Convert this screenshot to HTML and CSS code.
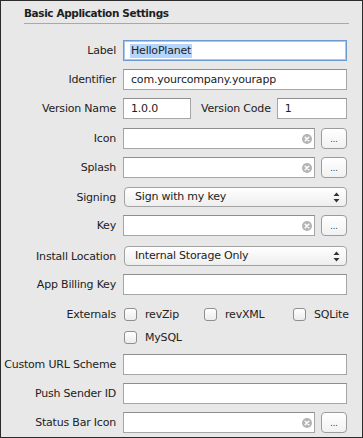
FILE: index.html
```html
<!DOCTYPE html>
<html lang="en">
<head>
  <meta charset="UTF-8">
  <title>Basic Application Settings</title>
  <link rel="stylesheet" href="styles.css">
</head>
<body>
  <div class="panel">
    <div class="header">Basic Application Settings</div>

    <div class="row first">
      <span class="label">Label</span>
      <div class="field focus"><span class="sel">HelloPlanet</span></div>
    </div>
    <div class="row">
      <span class="label">Identifier</span>
      <div class="field">com.yourcompany.yourapp</div>
    </div>
    <div class="row">
      <span class="label">Version Name</span>
      <div class="field short">1.0.0</div>
      <span class="label inline">Version Code</span>
      <div class="field">1</div>
    </div>
    <div class="row gap9">
      <span class="label">Icon</span>
      <div class="field file">
        <svg class="clear" width="10" height="10" viewBox="0 0 10 10"><circle cx="5" cy="5" r="5" fill="#b4b4b4"/><path d="M3.2 3.2 L6.8 6.8 M6.8 3.2 L3.2 6.8" stroke="#fff" stroke-width="1.5" stroke-linecap="round"/></svg>
      </div>
      <div class="browse">...</div>
    </div>
    <div class="row">
      <span class="label">Splash</span>
      <div class="field file">
        <svg class="clear" width="10" height="10" viewBox="0 0 10 10"><circle cx="5" cy="5" r="5" fill="#b4b4b4"/><path d="M3.2 3.2 L6.8 6.8 M6.8 3.2 L3.2 6.8" stroke="#fff" stroke-width="1.5" stroke-linecap="round"/></svg>
      </div>
      <div class="browse">...</div>
    </div>
    <div class="row gap9 popup-row">
      <span class="label">Signing</span>
      <div class="popup">
        <span>Sign with my key</span>
        <svg width="7" height="11" viewBox="0 0 7 11"><path d="M0.5 4 L3.5 0.5 L6.5 4 Z M0.5 7 L3.5 10.5 L6.5 7 Z" fill="#333"/></svg>
      </div>
    </div>
    <div class="row">
      <span class="label">Key</span>
      <div class="field file">
        <svg class="clear" width="10" height="10" viewBox="0 0 10 10"><circle cx="5" cy="5" r="5" fill="#b4b4b4"/><path d="M3.2 3.2 L6.8 6.8 M6.8 3.2 L3.2 6.8" stroke="#fff" stroke-width="1.5" stroke-linecap="round"/></svg>
      </div>
      <div class="browse">...</div>
    </div>
    <div class="row gap10 popup-row">
      <span class="label">Install Location</span>
      <div class="popup">
        <span>Internal Storage Only</span>
        <svg width="7" height="11" viewBox="0 0 7 11"><path d="M0.5 4 L3.5 0.5 L6.5 4 Z M0.5 7 L3.5 10.5 L6.5 7 Z" fill="#333"/></svg>
      </div>
    </div>
    <div class="row">
      <span class="label">App Billing Key</span>
      <div class="field"></div>
    </div>
    <div class="row externals-row">
      <span class="label">Externals</span>
      <div class="externals">
        <div class="check"><span class="box"></span>revZip</div>
        <div class="check"><span class="box"></span>revXML</div>
        <div class="check"><span class="box"></span>SQLite</div>
        <div class="check"><span class="box"></span>MySQL</div>
      </div>
    </div>
    <div class="row">
      <span class="label">Custom URL Scheme</span>
      <div class="field"></div>
    </div>
    <div class="row">
      <span class="label">Push Sender ID</span>
      <div class="field"></div>
    </div>
    <div class="row">
      <span class="label">Status Bar Icon</span>
      <div class="field file">
        <svg class="clear" width="10" height="10" viewBox="0 0 10 10"><circle cx="5" cy="5" r="5" fill="#b4b4b4"/><path d="M3.2 3.2 L6.8 6.8 M6.8 3.2 L3.2 6.8" stroke="#fff" stroke-width="1.5" stroke-linecap="round"/></svg>
      </div>
      <div class="browse">...</div>
    </div>
  </div>
</body>
</html>
```

FILE: styles.css
```css
* {
  margin: 0;
  padding: 0;
  box-sizing: border-box;
}
body {
  font-family: "DejaVu Sans", "Liberation Sans", sans-serif;
  font-size: 11px;
  letter-spacing: -0.2px;
  color: #222;
  background: #e8e8e8;
}
.panel {
  width: 363px;
  height: 438px;
  border: 1px solid #2b2b2b;
  background: #e8e8e8;
  overflow: hidden;
}
.header {
  margin: 0 13px 0 23px;
  padding: 5px 0 2px;
  line-height: 15px;
  font-size: 10.5px;
  font-weight: bold;
  letter-spacing: -0.4px;
  color: #1e1e1e;
  border-bottom: 1px solid #a8a8a8;
}
.row {
  display: flex;
  align-items: center;
  height: 21px;
  margin-top: 8px;
  padding-right: 15px;
}
.row.first {
  margin-top: 16px;
}
.row.gap9 {
  margin-top: 9px;
}
.row.gap10 {
  margin-top: 10px;
}
.label {
  flex: none;
  width: 115px;
  margin-right: 7px;
  text-align: right;
  line-height: 21px;
  white-space: nowrap;
}
.label.inline {
  width: auto;
  margin: 0 6px 0 10px;
}
.field {
  flex: 1;
  height: 21px;
  border: 1px solid #a6a6a6;
  border-top-color: #8e8e8e;
  background: #fff;
  padding: 0 7px;
  line-height: 19px;
  white-space: nowrap;
  overflow: hidden;
}
.field.short {
  flex: none;
  width: 68px;
}
.field.focus {
  border-color: #6e9ad4;
  box-shadow: inset 0 0 0 1px #a8c6ee;
}
.sel {
  display: inline-block;
  margin-left: -1px;
  padding: 0 1px;
  line-height: 14px;
  background: #b5d5fd;
}
.field.file {
  display: flex;
  align-items: center;
  justify-content: flex-end;
  padding-right: 2px;
}
.browse {
  flex: none;
  width: 26px;
  height: 21px;
  margin-left: 6px;
  border: 1px solid #9c9c9c;
  border-radius: 4px;
  background: linear-gradient(#ffffff, #f1f1f1);
  font-size: 8px;
  letter-spacing: 0;
  line-height: 21px;
  text-align: center;
  color: #333;
}
.popup-row {
  height: 20px;
}
.popup {
  flex: 1;
  height: 20px;
  margin-left: 1px;
  border: 1px solid #a2a2a2;
  border-radius: 4px;
  background: linear-gradient(#ffffff, #eeeeee);
  padding: 0 6px 0 10px;
  display: flex;
  align-items: center;
  justify-content: space-between;
  line-height: 18px;
}
.externals-row {
  height: auto;
  align-items: flex-start;
  margin-top: 11px;
}
.externals-row .label {
  line-height: 17px;
}
.externals {
  flex: 1;
  display: grid;
  grid-template-columns: 80px 89px 1fr;
  row-gap: 6px;
  padding-left: 1px;
}
.check {
  display: flex;
  align-items: center;
  height: 17px;
  line-height: 17px;
}
.box {
  flex: none;
  width: 13px;
  height: 13px;
  margin-right: 8px;
  border: 1px solid #8f8f8f;
  border-radius: 3px;
  background: linear-gradient(#ffffff, #ececec);
}
```
